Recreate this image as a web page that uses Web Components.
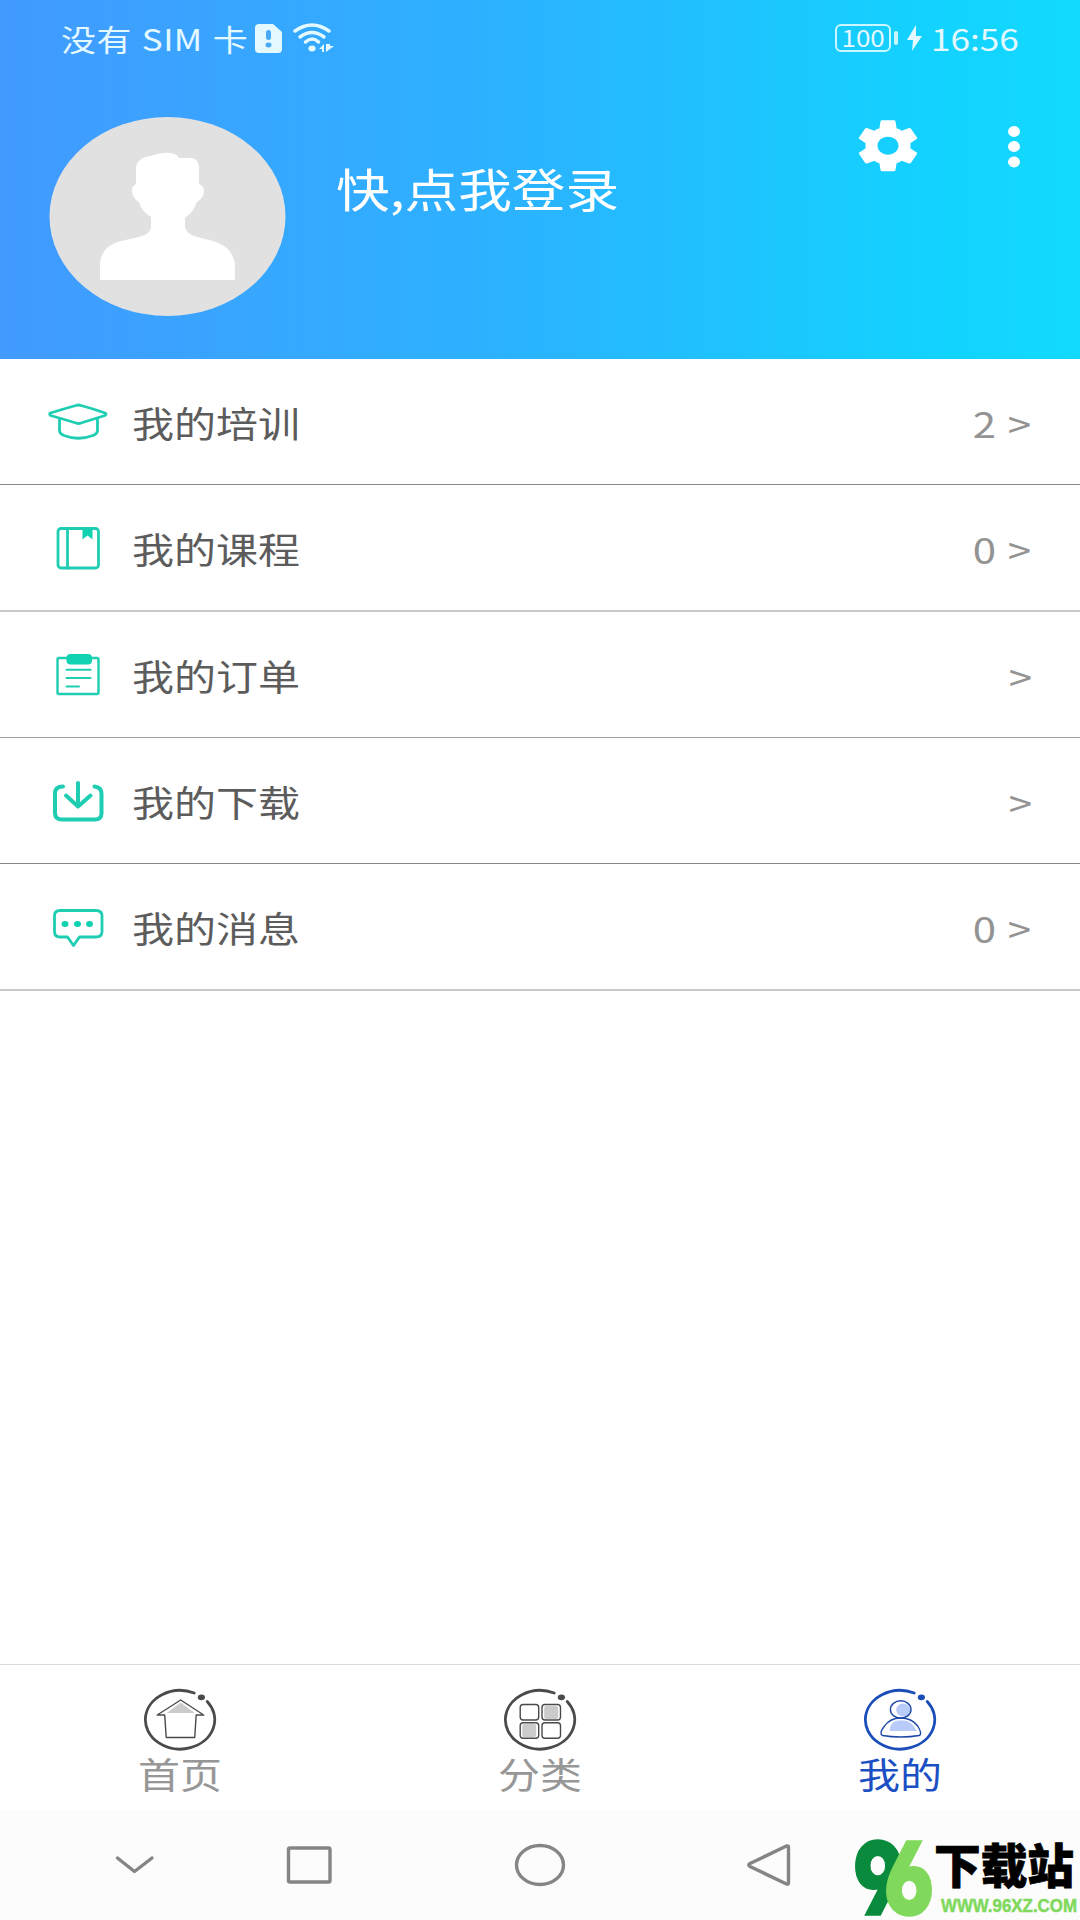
<!DOCTYPE html>
<html lang="zh-CN">
<head>
<meta charset="utf-8">
<title>我的</title>
<style>
  body {
    margin: 0;
    width: 1080px;
    height: 1920px;
    overflow: hidden;
    background: #fff;
    font-family: "Noto Sans CJK SC", sans-serif;
  }
</style>
</head>
<body>
<mine-page></mine-page>

<script>
// creates a template out of a markup string
function makeTemplate(html) {
  const template = document.createElement("template");
  template.innerHTML = html;
  return template;
}

class BaseElement extends HTMLElement {
  constructor() {
    super();
    const shadowRoot = this.attachShadow({ mode: "open" });
    shadowRoot.appendChild(this.constructor.template.content.cloneNode(true));
  }
}


// text drawn wider than its font, --stretch is the factor
class WideText extends BaseElement {
  static template = makeTemplate(`
<style>
:host {
  display: inline-block;
  white-space: nowrap;
  line-height: 1;
  transform: scaleX(var(--stretch, 1.166));
  transform-origin: var(--origin, left);
}
</style>
<slot></slot>`);
}
customElements.define("wide-text", WideText);


class StatusBar extends BaseElement {
  static template = makeTemplate(`
<style>
:host {
  display: flex;
  justify-content: space-between;
  height: 76px;
  padding: 0 61px 0 61px;
  color: #e4f8ff;
}
.group { display: flex; align-items: center; }
.carrier { width: 194px; font-size: 30px; letter-spacing: .4px; word-spacing: 1.4px; }
.battery {
  box-sizing: border-box;
  width: 56px;
  height: 28px;
  border: 2.5px solid #c9f6ff;
  border-radius: 6px;
  display: flex;
  align-items: center;
  justify-content: center;
}
.battery wide-text { font-size: 23px; --origin: center; --stretch: 1.13; margin-top: -2px; }
.nub { width: 4px; height: 14px; margin-left: 3px; border-radius: 2px; background: #c9f6ff; }
.bolt { margin-left: 9px; }
.time { font-size: 30px; margin-left: 8px; width: 88px; --stretch: 1.17; }
svg { display: block; }
</style>
<div class="group">
  <wide-text class="carrier">没有 SIM 卡</wide-text>
  <svg width="27" height="29" viewBox="0 0 27 29">
    <path fill="currentColor" d="M4 0h14l9 8v17q0 4-4 4H4q-4 0-4-4V4q0-4 4-4z"/>
    <rect x="11" y="6" width="5" height="10" rx="2.5" fill="#4aabf5"/>
    <ellipse cx="13.500" cy="21" rx="3" ry="2.400" fill="#4aabf5"/>
  </svg>
  <svg width="42" height="30" viewBox="0 0 42 30" style="margin-left:10px">
    <g fill="none" stroke="currentColor" stroke-width="3.500" stroke-linecap="round">
      <path d="M3 8q17-12 34 0"/>
      <path d="M8 14q12-9 24 0"/>
      <path d="M13.500 19q7-6 13 0"/>
    </g>
    <ellipse cx="20" cy="25.500" rx="3.600" ry="3" fill="currentColor"/>
    <path fill="currentColor" d="M27 26l5-5v8h-2v-3zM34 21v8l8-6h-4v-2z"/>
  </svg>
</div>
<div class="group">
  <div class="battery"><wide-text>100</wide-text></div>
  <div class="nub"></div>
  <svg class="bolt" width="16" height="26" viewBox="0 0 16 26">
    <path fill="currentColor" d="M9 0L0 15h6L5 26l10-15H9z"/>
  </svg>
  <wide-text class="time">16:56</wide-text>
</div>`);
}
customElements.define("status-bar", StatusBar);


class ProfileHeader extends BaseElement {
  static template = makeTemplate(`
<style>
:host {
  display: block;
  height: 359px;
  background: linear-gradient(90deg, #429aff 0%, #2bb3ff 48%, #13d2ff 86%, #12daff 100%);
}
.profile { display: flex; align-items: flex-start; padding: 39px 60px 0 48px; }
svg { display: block; flex: none; }
.name { margin: 49px 0 0 50px; color: #fff; font-size: 46px; flex: none; }
.actions { display: flex; align-items: center; margin-left: auto; gap: 83px; }
</style>
<status-bar></status-bar>
<div class="profile">
  <svg width="238" height="202" viewBox="0 0 238 202">
    <ellipse cx="119.500" cy="101.500" rx="118" ry="99.500" fill="#e1e1e1"/>
    <path fill="#fff" d="M52 165V149Q53 131 73 126L91 122Q103 119 103 112V102Q94 97 91 87Q84 83 84 75Q84 71 88 69V52Q90 42 103 41Q115 37 123 38Q129 39 131 43H144Q151 44 151 54V69Q156 71 156 76Q156 83 149 87Q146 96 137 103V112Q138 119 149 122L165 126Q184 131 187 149V165Z"/>
  </svg>
  <wide-text class="name">快,点我登录</wide-text>
  <div class="actions">
    <svg width="72" height="62" viewBox="0 -.1 24 24.400" preserveAspectRatio="none">
      <path fill="#fff" d="M19.430 12.980c.04-.32.07-.64.07-.98s-.03-.66-.07-.98l2.110-1.650c.19-.15.24-.42.12-.64l-2-3.460c-.12-.22-.39-.3-.61-.22l-2.490 1c-.52-.4-1.080-.73-1.690-.98l-.38-2.650C14.460 2.180 14.250 2 14 2h-4c-.25 0-.46.18-.49.42l-.38 2.650c-.61.25-1.170.59-1.690.98l-2.490-1c-.23-.09-.49 0-.61.22l-2 3.460c-.13.22-.07.49.12.64l2.110 1.650c-.04.32-.07.65-.07.98s.03.66.07.98l-2.110 1.650c-.19.15-.24.42-.12.64l2 3.460c.12.22.39.3.61.22l2.490-1c.52.4 1.080.73 1.690.98l.38 2.650c.03.24.24.42.49.42h4c.25 0 .46-.18.49-.42l.38-2.650c.61-.25 1.170-.59 1.690-.98l2.490 1c.23.09.49 0 .61-.22l2-3.460c.12-.22.07-.49-.12-.64l-2.110-1.650zM12 15.500c-1.930 0-3.500-1.570-3.500-3.500s1.570-3.500 3.500-3.500 3.500 1.570 3.500 3.500-1.570 3.500-3.500 3.500z"/>
    </svg>
    <svg width="13" height="62" viewBox="0 0 13 62" fill="#fff">
      <ellipse cx="7" cy="16.500" rx="6" ry="5.400"/>
      <ellipse cx="7" cy="31.500" rx="6" ry="5.400"/>
      <ellipse cx="7" cy="47" rx="6" ry="5.400"/>
    </svg>
  </div>
</div>`);
}
customElements.define("profile-header", ProfileHeader);


// one row of the menu: icon in its slot, label and count as attributes
class MenuRow extends BaseElement {
  static template = makeTemplate(`
<style>
:host {
  display: flex;
  align-items: center;
  height: 125px;
  padding: 0 48.5px 0 46px;
  border-bottom: 1px solid #888;
  font-size: 36px;
}
.label { margin-left: 22px; color: #5c5c5c; }
.value { margin-left: auto; color: #939393; word-spacing: 2px; --origin: right; }
</style>
<slot></slot>
<wide-text class="label"></wide-text>
<wide-text class="value"></wide-text>`);

  connectedCallback() {
    this.shadowRoot.querySelector(".label").textContent = this.getAttribute("label");
    const count = this.getAttribute("count");
    this.shadowRoot.querySelector(".value").textContent = count ? count + " >" : ">";
  }
}
customElements.define("menu-row", MenuRow);


class MineMenu extends BaseElement {
  static template = makeTemplate(`
<style>
:host { display: block; }
svg { display: block; width: 64px; height: 57px; fill: none; stroke: #1fceb2; stroke-width: 2.8; stroke-linecap: round; stroke-linejoin: round; }
.solid { fill: #10d2b0; }
.heavy { stroke-width: 4; }
.thick { border-bottom: 2px solid #c8c8c8; }
.mid { border-bottom-color: #a2a2a2; }
</style>
<menu-row label="我的培训" count="2">
  <svg viewBox="0 0 64 57">
    <path d="M4.500 20Q17 16 30 12.500Q32.500 11.500 35 12.500Q48 16 59 20Q61 21 59 22.500Q48 26 35 30Q32.500 31 30 30Q17 26 4.500 22.500Q3 21 4.500 20Z"/>
    <path d="M13.500 26.500V38Q14 41 18 42.500Q32 48 47 42.500Q51 41 51.500 38V26.500"/>
  </svg>
</menu-row>
<menu-row class="thick" label="我的课程" count="0">
  <svg viewBox="0 0 64 57">
    <rect x="12" y="9.500" width="40.500" height="39.500" rx="3"/>
    <path d="M21.500 10v39"/>
    <path class="solid" stroke="none" d="M36.500 10h10v10.500l-5-4-5 4z"/>
  </svg>
</menu-row>
<menu-row class="mid" label="我的订单">
  <svg viewBox="0 0 64 57">
    <rect x="11.500" y="12" width="41" height="36" rx="1.500" stroke-width="2.400"/>
    <rect class="solid" stroke="none" x="20.500" y="8" width="25.500" height="10.500" rx="4"/>
    <path stroke-width="2" d="M20.500 23.700h24M20.500 32h24M20.500 40.500h12.500"/>
  </svg>
</menu-row>
<menu-row label="我的下载">
  <svg class="heavy" viewBox="0 0 64 57">
    <path d="M17 14.500q-8 0-8 7V41q0 6.500 7 6.500H49q6.500 0 6.500-6.500V21.500q0-6-7-7"/>
    <path d="M32 11v23.500M20 23.500l12 11 12.500-11"/>
  </svg>
</menu-row>
<menu-row class="thick" label="我的消息" count="0">
  <svg viewBox="0 0 64 57">
    <path d="M14 12.500H50q6 0 6 5.500V33.500q0 5.500-6 5.500H33.500L27.500 47.500L21.500 39H14q-5.500 0-5.500-5.500V18q0-5.500 5.500-5.500Z"/>
    <g class="solid" stroke="none"><ellipse cx="19" cy="26" rx="3.500" ry="3"/><ellipse cx="31.500" cy="26" rx="3.500" ry="3"/><ellipse cx="43.500" cy="26" rx="3.500" ry="3"/></g>
  </svg>
</menu-row>`);
}
customElements.define("mine-menu", MineMenu);


// bottom tab: ring icon goes into the icon slot, the label into the default one
class TabItem extends BaseElement {
  static template = makeTemplate(`
<style>
:host {
  display: flex;
  flex: 1;
  flex-direction: column;
  align-items: center;
  color: #979797;
  font-size: 36px;
}
wide-text { --origin: center; margin-top: 2px; }
</style>
<slot name="icon"></slot>
<wide-text><slot></slot></wide-text>`);
}
customElements.define("tab-item", TabItem);


class TabBar extends BaseElement {
  static template = makeTemplate(`
<style>
:host {
  display: flex;
  box-sizing: border-box;
  height: 146px;
  padding-top: 23px;
  border-top: 1px solid #dadada;
}
svg { display: block; flex: none; width: 76px; height: 65px; fill: none; stroke: #4a4a4a; stroke-width: 1.4; stroke-linejoin: round; }
.ring { stroke-width: 2.8; stroke-linecap: round; }
.dot { fill: #4a4a4a; stroke: none; }
.shade { fill: #cbcbcb; stroke: none; }
.active { color: #1c4fc4; }
.active svg { stroke: #1c49a8; }
.active .ring { stroke: #1a4db8; }
.active .dot { fill: #1a4db8; }
.active .shade { fill: #b9cbf8; }
</style>
<tab-item>
  <svg slot="icon" viewBox="-.7 0 76 65">
    <path class="ring" d="M51.500 5A34.700 29.300 0 1 0 64.500 13.500"/>
    <ellipse class="dot" cx="58.700" cy="9.300" rx="3.600" ry="2.900"/>
    <path class="shade" d="M38 14.500L52 25H24z"/>
    <path d="M38 12L61 27H53.500L52 49.500H23.500L22 27H14.500Z"/>
  </svg>首页</tab-item>
<tab-item>
  <svg slot="icon" viewBox="-.7 0 76 65">
    <path class="ring" d="M51.500 5A34.700 29.300 0 1 0 64.500 13.500"/>
    <ellipse class="dot" cx="58.700" cy="9.300" rx="3.600" ry="2.900"/>
    <rect class="shade" x="41.500" y="18" width="14" height="13" rx="2"/>
    <rect class="shade" x="19.500" y="36" width="14" height="13" rx="2"/>
    <rect x="17.500" y="16.500" width="18.500" height="15.500" rx="3"/>
    <rect x="39.300" y="16.500" width="18.500" height="15.500" rx="3"/>
    <rect x="17.500" y="34.700" width="18.500" height="15.500" rx="3"/>
    <rect x="39.300" y="34.700" width="18.500" height="15.500" rx="3"/>
  </svg>分类</tab-item>
<tab-item class="active">
  <svg slot="icon" viewBox="-.7 0 76 65">
    <path class="ring" d="M51.500 5A34.700 29.300 0 1 0 64.500 13.500"/>
    <ellipse class="dot" cx="58.700" cy="9.300" rx="3.600" ry="2.900"/>
    <ellipse class="shade" cx="40.500" cy="22" rx="7" ry="6.500"/>
    <path class="shade" d="M27 43Q27 34 35 32.500H42Q50 34 54 43Z"/>
    <ellipse cx="38" cy="21.500" rx="10.300" ry="8.700"/>
    <path d="M38 30Q49 30 55 38Q60 46 56.500 47.500Q48 49 38 49Q28 49 20 47.500Q16 46 21 39Q27 30 38 30Z"/>
  </svg>我的</tab-item>`);
}
customElements.define("tab-bar", TabBar);


// android navigation keys
class SystemKeys extends BaseElement {
  static template = makeTemplate(`
<style>
:host {
  display: flex;
  align-items: center;
  box-sizing: border-box;
  height: 110px;
  padding-left: 115px;
  background: #fcfcfc;
}
svg { display: block; fill: none; stroke: #858585; stroke-width: 3.4; stroke-linecap: round; stroke-linejoin: round; }
</style>
<svg width="40" height="44" viewBox="0 0 40 44"><path d="M2.500 15L19.500 28.500L37 15"/></svg>
<svg width="46" height="44" viewBox="0 0 46 44" style="margin-left:131px"><rect x="2.500" y="5" width="41.500" height="34" rx="1.500"/></svg>
<svg width="52" height="44" viewBox="0 0 52 44" style="margin-left:182px"><ellipse cx="26" cy="22" rx="23.500" ry="19.500"/></svg>
<svg width="46" height="44" viewBox="0 0 46 44" style="margin-left:180px"><path d="M40.500 3Q42.500 2.500 42.500 4V40Q42.500 41.700 40.500 41L4 23.500Q1.500 22 4 20.500Z"/></svg>`);
}
customElements.define("system-keys", SystemKeys);


class SiteMark extends BaseElement {
  static template = makeTemplate(`
<style>
:host { display: block; }
svg { display: block; }
text { font-family: Inter, "Liberation Sans", sans-serif; font-weight: 900; }
/* open six and nine, with straight diagonals */
.num { font-feature-settings: "cv03", "cv04", "ss01"; stroke-width: 1.5; }
.cn { font-family: "Noto Sans CJK SC", sans-serif; }
.url { font-family: "Liberation Sans", sans-serif; font-weight: 700; }
</style>
<svg width="230" height="86" viewBox="0 0 230 86">
  <text class="num" x="3" y="80.500" font-size="102" textLength="50" lengthAdjust="spacingAndGlyphs" fill="#0a8a3c" stroke="#0a8a3c">9</text>
  <text class="num" x="34" y="80.500" font-size="102" textLength="50" lengthAdjust="spacingAndGlyphs" fill="#80d95c" stroke="#80d95c">6</text>
  <text class="cn" x="84" y="48.500" font-size="47" textLength="140" lengthAdjust="spacingAndGlyphs" fill="#000" stroke="#000" stroke-width=".8">下载站</text>
  <text class="url" x="91" y="78" font-size="18" textLength="136" lengthAdjust="spacingAndGlyphs" fill="#80d95c" stroke="#80d95c" stroke-width=".5">WWW.96XZ.COM</text>
</svg>`);
}
customElements.define("site-mark", SiteMark);


class MinePage extends BaseElement {
  static template = makeTemplate(`
<style>
:host {
  display: flex;
  flex-direction: column;
  position: relative;
  width: 1080px;
  height: 1920px;
}
mine-menu { flex: 1; }
/* lies over the navigation keys */
site-mark { position: absolute; right: 0; bottom: 0; }
</style>
<profile-header></profile-header>
<mine-menu></mine-menu>
<tab-bar></tab-bar>
<system-keys></system-keys>
<site-mark></site-mark>`);
}
customElements.define("mine-page", MinePage);
</script>
</body>
</html>
